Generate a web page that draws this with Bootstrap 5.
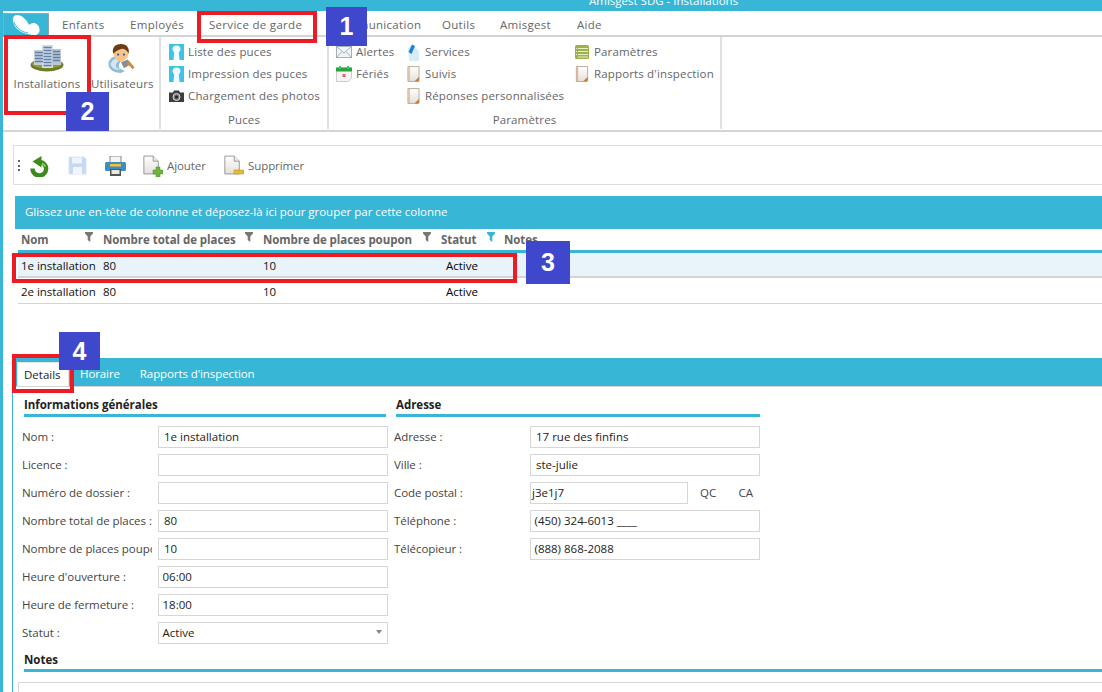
<!DOCTYPE html>
<html lang="fr"><head><meta charset="utf-8"><title>Amisgest SDG - Installations</title>
<link href="https://cdn.jsdelivr.net/npm/bootstrap@5.3.0/dist/css/bootstrap.min.css" rel="stylesheet">
<style>
:root{--cy:#37b6d6;--ln:#d4d4d4}
html,body{height:692px;overflow:hidden}
body{font:11.5px/16px "Open Sans",sans-serif;color:#444;background:#fff}
.app{border-left:3px solid var(--cy);height:692px;position:relative;overflow:hidden}
.tbar{height:11px;background:var(--cy);color:#fff;overflow:hidden;padding-left:589px;line-height:1px;font-size:11.5px;margin-left:-3px;box-sizing:content-box}
.menu{height:26px;border-bottom:2px solid var(--ln);padding-top:2px;color:#666}
.logo{width:46px;height:24px;background:var(--cy);border:1px solid #8fa7ad;border-bottom:0}
.mi{position:absolute;top:17px;letter-spacing:.3px}
.menu span{line-height:16px}
.ribbon{height:95px;border-bottom:2px solid var(--ln);color:#666;letter-spacing:.15px}
.rgrp{border-right:2px solid #e0e0e0;position:relative;height:92px;padding-top:4px}
.g1{width:158px}.g2{width:168px;padding-left:8px}.g3{width:393px;padding-left:7px}
.bigb{position:absolute;top:0;text-align:center}
.bigb svg{display:block;margin:6px auto 3px}
.ritem{height:22px;white-space:nowrap;gap:4px}
.m1{margin-right:1px}
.rcap{position:absolute;bottom:1px;left:0;right:0;text-align:center;line-height:16px}
.toolbox{margin:13px -2px 0 10px;height:40px;border:1px solid #ddd;border-right:0;color:#666;position:relative}
.grip{position:absolute;left:4px;top:14px;width:2px;height:11px;background:repeating-linear-gradient(#666 0 2px,transparent 2px 4.5px)}
.tool{position:absolute;top:10px;height:20px;gap:4px;letter-spacing:-.08px}
.gpanel{margin:11px 0 0 12px;height:33px;background:var(--cy);color:#fff;padding:8px 10px;line-height:16px;letter-spacing:-.02px}
.gridt{margin:0 0 0 15px;width:calc(100% - 15px);table-layout:fixed;color:#333}
.gridt>:not(caption)>*>*{padding:0 0 0 3px;border:0;background:none;box-shadow:none;color:inherit;vertical-align:middle}
.gridt thead th{height:22px;padding-top:1px;border-bottom:3px solid var(--cy);font-weight:700;color:#666;position:relative;letter-spacing:-.05px}
.gridt tbody td{height:26px;padding-top:3px;border-bottom:1px solid var(--ln);color:#111;letter-spacing:-.03px}
.gridt tbody td.stat{padding-left:8px;color:#000}
.gridt tbody tr.sel td{background:#e8f4f9;border-bottom:2px solid var(--ln)}
.w1{width:82px}.w2{width:160px}.w3{width:178px}.w4{width:63px}
.flt{position:absolute;top:3px}
.tabb{margin:54px 0 0 10px;height:29px;background:var(--cy);border-bottom:1px solid var(--ln);color:#fff;padding-left:4px}
.tabi{height:24px;line-height:23px;margin-top:4px}
.tabi.on{background:#fff;color:#222;border:1px solid #e4e4e4;border-bottom:0;margin-right:3px;width:52px;padding-left:6px}
.tabi.oth{margin-left:8px;margin-right:12px;color:#fff;letter-spacing:-.1px}
.panel{margin-left:9px;border-left:1px solid var(--cy);padding-top:10px;height:310px;position:relative}
.fcol{margin-left:11px;width:362px}
.fcol2{margin-left:10px;width:364px}
.sect{font-weight:700;color:#222;line-height:16px;border-bottom:3px solid var(--cy);height:20px;letter-spacing:-.02px;box-sizing:border-box}
.frows{margin-top:9px;margin-left:-2px;width:366px}
.frow{height:22px;margin-bottom:6px}
.flab{width:130px;margin-right:6px;flex:none;white-space:nowrap;overflow:hidden;line-height:22px;color:#444;letter-spacing:-.05px}
.finp{flex:1;height:22px;border:1px solid #d6d6d6;padding:0 5px;line-height:20px;color:#222;min-width:0;background:#fff}
.finp.nar{flex:none;width:158px;padding-left:1px}
.finp.pt{padding-left:3.500px}
.caret{margin-left:auto;width:0;height:0;border:3.5px solid transparent;border-top:4px solid #888;border-bottom:0;margin-top:7px}
.qc{width:53px;line-height:22px;margin-right:7px}
.notes{margin:2px 0 0 11px}
.nbox{margin:10px 0 0 -6px;height:40px;border:1px solid #d6d6d6;border-right:0}
.ann{position:absolute;border:4px solid #ed1c24;pointer-events:none}
.anum{position:absolute;background:#3f48cc;color:#fff;font:700 25px/1 "Liberation Sans",sans-serif;display:flex;align-items:center;justify-content:center}
</style></head><body>
<svg width="0" height="0" class="position-absolute">
<defs>
<linearGradient id="pg" x1="0" x2="0" y1="0" y2="1"><stop offset="0" stop-color="#fff"/><stop offset="1" stop-color="#e4e0da"/></linearGradient>
<symbol id="pin" viewBox="0 0 15 16"><rect width="15" height="16" fill="#3cc3ea"/><path d="M7.500 1.500c2.600 0 4 1.800 4 3.600 0 1.600-.9 2.500-1.700 3.200l.7 7.700H4.500l.7-7.700C4.400 7.600 3.500 6.700 3.500 5.100c0-1.800 1.400-3.600 4-3.600z" fill="#f4fbfd"/></symbol>
<symbol id="doc" viewBox="0 0 14 17"><path d="M1 .5h12v15l-1 1H1z" fill="url(#pg)" stroke="#bda78f"/><rect x="1.500" y="1" width="1.500" height="15" fill="#e4b894"/><path d="M13 11.500v5H8z" fill="#c87f3d"/></symbol>
<symbol id="pg2" viewBox="0 0 20 22"><path d="M1 .5h11l6 6v15H1z" fill="url(#pg)" stroke="#8a8a8a"/><path d="M12 .5v6h6" fill="#eee" stroke="#8a8a8a"/></symbol>
<symbol id="flt" viewBox="0 0 8 10"><path d="M0 0h8v1.500L5.300 4.500V10L2.700 8V4.500L0 1.500z"/></symbol>
</defs></svg>
<div class="app">
 <div class="tbar">Amisgest SDG - Installations</div>
 <div class="menu">
  <div class="logo"><svg width="44" height="23" viewBox="0 0 44 23"><path d="M13 1c-3 0-4.500 2.500-4 6 .5 4 3 8 7.500 10.500 4 2.200 10 3.500 14 3.500 3.500 0 5.500-2.500 5-6-.4-3.500-3-6-6-6-2 0-3.500 1-4.500 2C23 6 18 1 13 1z" fill="#fff"/><path d="M10 8c1.500 5 7 10 14 11" fill="none" stroke="#37b6d6" stroke-width="1"/></svg></div>
  <span class="mi" style="left:59px">Enfants</span><span class="mi" style="left:127px">Employés</span><span class="mi" style="left:206px">Service de garde</span><span class="mi" style="left:329px">Communication</span><span class="mi" style="left:439px">Outils</span><span class="mi" style="left:497px">Amisgest</span><span class="mi" style="left:574px">Aide</span>
 </div>
 <div class="ribbon d-flex">
  <div class="rgrp g1">
   <div class="bigb" style="left:10px;width:68px"><svg width="36" height="30" viewBox="0 0 36 30"><ellipse cx="18" cy="22" rx="16.500" ry="6.500" fill="#6f7d22"/><ellipse cx="18" cy="20.500" rx="15" ry="5" fill="#8f9d3a"/><rect x="5" y="7" width="10" height="15" fill="#c5ced8"/><rect x="13" y="2" width="11" height="23" fill="#d3dbe4"/><rect x="23" y="6" width="9" height="16" fill="#bcc6d2"/><path d="M6 9.500h8M6 12.500h8M6 15.500h8M6 18.500h8M14.500 4.500h8M14.500 7.500h8M14.500 10.500h8M14.500 13.500h8M14.500 16.500h8M14.500 19.500h8M14.500 22.500h8M24 8.500h7M24 11.500h7M24 14.500h7M24 17.500h7" stroke="#5e80ad" stroke-width="1.500"/></svg>Installations</div>
   <div class="bigb" style="left:88px;width:62px"><svg width="30" height="30" viewBox="0 0 30 31"><path d="M1 22c0-4 3-7 6-8l8 4c-3 2-4 5-3 8l6 3-4 2c-6 0-13-3-13-9z" fill="#8fbcd8"/><path d="M3 22c1-3 3-5 5-6l4 2c-2 2-4 4-3 7l4 3c-5 0-9-2-10-6z" fill="#d3e6f1"/><ellipse cx="14" cy="11" rx="7.500" ry="8" fill="#f6c48c"/><path d="M6 11C4 4 9 1 14 1s9 3 8 10c-2-3-4-5-7-5-3 1-6 2-9 5z" fill="#6b3d16"/><circle cx="11" cy="12" r="1.100" fill="#2a5a8a"/><circle cx="17" cy="12" r="1.100" fill="#2a5a8a"/><path d="M14 20l7-3 3 5-7 4z" fill="#8d8d8d"/><path d="M22 18l6 7-2 2-6-6z" fill="#c98d4a"/></svg>Utilisateurs</div>
  </div>
  <div class="rgrp g2">
   <div class="ritem d-flex align-items-center"><svg width="15" height="16"><use href="#pin"/></svg>Liste des puces</div>
   <div class="ritem d-flex align-items-center"><svg width="15" height="16"><use href="#pin"/></svg>Impression des puces</div>
   <div class="ritem d-flex align-items-center"><svg width="15" height="12" viewBox="0 0 15 12"><path d="M0 2.500h4l1-2h5l1 2h4V12H0z" fill="#3d3d3d"/><circle cx="7.500" cy="7" r="3.500" fill="#777" stroke="#ddd"/><circle cx="7.500" cy="7" r="1.500" fill="#222"/></svg>Chargement des photos</div>
   <div class="rcap">Puces</div>
  </div>
  <div class="rgrp g3 d-flex">
   <div style="width:71px">
    <div class="ritem d-flex align-items-center"><svg width="16" height="12" viewBox="0 0 16 12"><rect x=".5" y=".5" width="15" height="11" fill="#f2f5f7" stroke="#a6b0b6"/><path d="M.5.500 8 7l7.500-6.500M.5 11.500 6 5.500M15.500 11.500 10 5.500" fill="none" stroke="#a6b0b6"/></svg>Alertes</div>
    <div class="ritem d-flex align-items-center"><svg width="16" height="16" viewBox="0 0 16 16"><path d="M.5 2h15v10l-3 3.500H.5z" fill="#f6f4f4" stroke="#ccc"/><rect x="0" y="1.500" width="16" height="4" fill="#2f9e44"/><rect x="3" y="0" width="2" height="3" fill="#3c5"/><rect x="11" y="0" width="2" height="3" fill="#3c5"/><rect x="6.500" y="8" width="3" height="3" fill="#e0656d"/></svg>Fériés</div>
   </div>
   <div style="width:168px">
    <div class="ritem d-flex align-items-center"><svg class="m1" width="13" height="17" viewBox="0 0 13 17"><path d="M1 4 6 1l6 6v10H2z" fill="#d8ecf4"/><path d="M1.500 8 5 .5l3 1.500-3.500 8z" fill="#1f7fd0"/></svg>Services</div>
    <div class="ritem d-flex align-items-center"><svg class="m1" width="13" height="16"><use href="#doc"/></svg>Suivis</div>
    <div class="ritem d-flex align-items-center"><svg class="m1" width="13" height="16"><use href="#doc"/></svg>Réponses personnalisées</div>
   </div>
   <div>
    <div class="ritem d-flex align-items-center"><svg class="m1" width="14" height="14" viewBox="0 0 14 14"><rect width="14" height="14" rx="1.500" fill="#9db24a"/><path d="M3 3.500h10M3 6.500h10M3 9.500h10M3 12h10M1 3.500h1M1 6.500h1M1 9.500h1" stroke="#e8efcb"/></svg>Paramètres</div>
    <div class="ritem d-flex align-items-center"><svg class="m1" width="14" height="16"><use href="#doc"/></svg>Rapports d'inspection</div>
   </div>
   <div class="rcap">Paramètres</div>
  </div>
 </div>
 <div class="toolbox">
  <div class="grip"></div>
  <div class="tool" style="left:15px"><svg width="21" height="21" viewBox="0 0 21 21"><path d="M11 6a6.800 6.800 0 1 1-7.500 6.500" fill="none" stroke="#3d8a1f" stroke-width="4.500"/><path d="M12.500 0v11.500L3.500 5.500z" fill="#3d8a1f"/><path d="M13 7.500a5 5 0 0 1 3.500 3" fill="none" stroke="#9bd35c" stroke-width="1.500"/></svg></div>
  <div class="tool" style="left:54px"><svg width="19" height="19" viewBox="0 0 19 19"><path d="M1 1h15l2 2v15H1z" fill="#c6d8f2" stroke="#d6e2f5"/><rect x="4" y="1.500" width="10" height="6" fill="#eef4fc"/><rect x="5" y="11" width="9" height="7" fill="#f2f5fa"/></svg></div>
  <div class="tool" style="left:91px"><svg width="21" height="20" viewBox="0 0 21 20"><rect x="5" y="0" width="11" height="7" fill="#f4f4f4" stroke="#888"/><rect x="0" y="6" width="21" height="9" rx="1.500" fill="#3d8dc5"/><rect x="5" y="8" width="11" height="2.500" fill="#f2c230"/><rect x="5" y="13" width="11" height="7" fill="#555"/><rect x="6.500" y="14" width="8" height="4" fill="#e8e8e8"/></svg></div>
  <div class="tool d-flex align-items-center" style="left:129px"><svg width="20" height="22" viewBox="0 0 20 22"><use href="#pg2" width="17" height="20"/><path d="M10 15h3v-3h4v3h3v4h-3v3h-4v-3h-3z" fill="#6eb43f" stroke="#4b8a24" stroke-width=".5"/></svg>Ajouter</div>
  <div class="tool d-flex align-items-center" style="left:210px"><svg width="20" height="22" viewBox="0 0 20 22"><use href="#pg2" width="17" height="20"/><rect x="10" y="15" width="10" height="4" fill="#e9b93a" stroke="#b98d1f" stroke-width=".5"/></svg>Supprimer</div>
 </div>
 <div class="gpanel">Glissez une en-tête de colonne et déposez-là ici pour grouper par cette colonne</div>
 <table class="table gridt mb-0">
  <thead><tr><th class="w1">Nom<svg class="flt" style="left:67px" width="8" height="10" fill="#777"><use href="#flt"/></svg></th><th class="w2">Nombre total de places<svg class="flt" style="left:145px" width="8" height="10" fill="#777"><use href="#flt"/></svg></th><th class="w3">Nombre de places poupon<svg class="flt" style="left:163px" width="8" height="10" fill="#777"><use href="#flt"/></svg></th><th class="w4">Statut<svg class="flt" style="left:49px" width="8" height="10" fill="#37b6d6"><use href="#flt"/></svg></th><th>Notes</th></tr></thead>
  <tbody>
   <tr class="sel"><td>1e installation</td><td>80</td><td>10</td><td class="stat">Active</td><td></td></tr>
   <tr><td>2e installation</td><td>80</td><td>10</td><td class="stat">Active</td><td></td></tr>
  </tbody>
 </table>
 <div class="tabb d-flex"><div class="tabi on">Details</div><div class="tabi oth">Horaire</div><div class="tabi oth">Rapports d'inspection</div></div>
 <div class="panel">
  <div class="d-flex">
   <div class="fcol">
    <div class="sect">Informations générales</div>
    <div class="frows">
     <div class="frow d-flex"><div class="flab">Nom :</div><div class="finp">1e installation</div></div>
     <div class="frow d-flex"><div class="flab">Licence :</div><div class="finp"></div></div>
     <div class="frow d-flex"><div class="flab">Numéro de dossier :</div><div class="finp"></div></div>
     <div class="frow d-flex"><div class="flab">Nombre total de places :</div><div class="finp">80</div></div>
     <div class="frow d-flex"><div class="flab">Nombre de places poupon :</div><div class="finp">10</div></div>
     <div class="frow d-flex"><div class="flab">Heure d'ouverture :</div><div class="finp pt">06:00</div></div>
     <div class="frow d-flex"><div class="flab">Heure de fermeture :</div><div class="finp pt">18:00</div></div>
     <div class="frow d-flex"><div class="flab">Statut :</div><div class="finp pt d-flex">Active<span class="caret"></span></div></div>
    </div>
   </div>
   <div class="fcol2">
    <div class="sect">Adresse</div>
    <div class="frows">
     <div class="frow d-flex"><div class="flab">Adresse :</div><div class="finp">17 rue des finfins</div></div>
     <div class="frow d-flex"><div class="flab">Ville :</div><div class="finp">ste-julie</div></div>
     <div class="frow d-flex"><div class="flab">Code postal :</div><div class="finp nar">j3e1j7</div><div class="qc ms-auto d-flex justify-content-between"><span>QC</span><span>CA</span></div></div>
     <div class="frow d-flex"><div class="flab">Téléphone :</div><div class="finp pt">(450) 324-6013 ____</div></div>
     <div class="frow d-flex"><div class="flab">Télécopieur :</div><div class="finp pt">(888) 868-2088</div></div>
    </div>
   </div>
  </div>
  <div class="notes"><div class="sect">Notes</div><div class="nbox"></div></div>
 </div>
 <div class="ann" style="left:194px;top:11px;width:120px;height:32px"></div>
 <div class="anum" style="left:323px;top:7px;width:41px;height:39px">1</div>
 <div class="ann" style="left:1px;top:35px;width:87px;height:80px"></div>
 <div class="anum" style="left:63px;top:92px;width:43px;height:39px">2</div>
 <div class="ann" style="left:9px;top:253px;width:505px;height:30px"></div>
 <div class="anum" style="left:523px;top:241px;width:44px;height:43px">3</div>
 <div class="ann" style="left:9px;top:354px;width:62px;height:39px"></div>
 <div class="anum" style="left:56px;top:332px;width:41px;height:38px">4</div>
</div>
<script src="https://cdn.jsdelivr.net/npm/bootstrap@5.3.0/dist/js/bootstrap.bundle.min.js"></script>
</body></html>
